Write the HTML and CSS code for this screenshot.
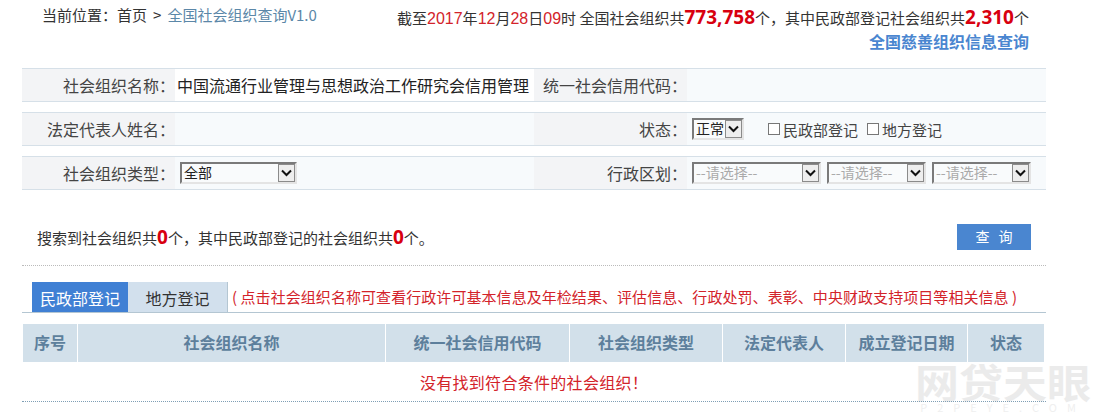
FILE: index.html
```html
<!DOCTYPE html>
<html lang="zh-CN">
<head>
  <meta charset="utf-8">
  <title>全国社会组织查询</title>
  <link rel="stylesheet" href="styles.css">
</head>
<body>
  <div class="page">
    <div class="top">
      <div class="crumb">当前位置<span class="pt">：</span>首页<span class="sep">&gt;</span><a href="#">全国社会组织查询V1.0</a></div>
      <div class="stat">
        <p>截至<span class="red">2017</span>年<span class="red">12</span>月<span class="red">28</span>日<span class="red">09</span>时 全国社会组织共<b class="num">773,758</b>个<span class="pt">，</span>其中民政部登记社会组织共<b class="num">2,310</b>个</p>
        <a class="charity" href="#">全国慈善组织信息查询</a>
      </div>
    </div>

    <div class="form-row">
      <div class="label">社会组织名称<span class="pt">：</span></div>
      <div class="value white">中国流通行业管理与思想政治工作研究会信用管理</div>
      <div class="label label-b">统一社会信用代码<span class="pt">：</span></div>
      <div class="value"></div>
    </div>
    <div class="form-row">
      <div class="label">法定代表人姓名<span class="pt">：</span></div>
      <div class="value"></div>
      <div class="label">状态<span class="pt">：</span></div>
      <div class="value">
        <div class="sel sel-status"><span>正常</span><i class="arrow"><svg width="11" height="8" viewBox="0 0 11 8"><path d="M1 1.5 5.5 6 10 1.5" fill="none" stroke="#111" stroke-width="2"/></svg></i></div>
        <label class="check first"><i class="box"></i>民政部登记</label>
        <label class="check"><i class="box"></i>地方登记</label>
      </div>
    </div>
    <div class="form-row">
      <div class="label">社会组织类型<span class="pt">：</span></div>
      <div class="value">
        <div class="sel sel-type"><span>全部</span><i class="arrow"><svg width="11" height="8" viewBox="0 0 11 8"><path d="M1 1.5 5.5 6 10 1.5" fill="none" stroke="#111" stroke-width="2"/></svg></i></div>
      </div>
      <div class="label">行政区划<span class="pt">：</span></div>
      <div class="value areas">
        <div class="sel sel-a1 grey"><span>--请选择--</span><i class="arrow"><svg width="11" height="8" viewBox="0 0 11 8"><path d="M1 1.5 5.5 6 10 1.5" fill="none" stroke="#111" stroke-width="2"/></svg></i></div>
        <div class="sel sel-a2 grey"><span>--请选择--</span><i class="arrow"><svg width="11" height="8" viewBox="0 0 11 8"><path d="M1 1.5 5.5 6 10 1.5" fill="none" stroke="#111" stroke-width="2"/></svg></i></div>
        <div class="sel sel-a2 grey"><span>--请选择--</span><i class="arrow"><svg width="11" height="8" viewBox="0 0 11 8"><path d="M1 1.5 5.5 6 10 1.5" fill="none" stroke="#111" stroke-width="2"/></svg></i></div>
      </div>
    </div>

    <div class="result">
      <div class="result-text">搜索到社会组织共<b class="zero">0</b>个<span class="pt">，</span>其中民政部登记的社会组织共<b class="zero">0</b>个。</div>
      <a class="btn" href="#">查 询</a>
    </div>

    <div class="tabs">
      <a class="tab active" href="#">民政部登记</a>
      <a class="tab" href="#">地方登记</a>
      <span class="hint">( 点击社会组织名称可查看行政许可基本信息及年检结果、评估信息、行政处罚、表彰、中央财政支持项目等相关信息 )</span>
    </div>

    <div class="thead">
      <div>序号</div>
      <div>社会组织名称</div>
      <div>统一社会信用代码</div>
      <div>社会组织类型</div>
      <div>法定代表人</div>
      <div>成立登记日期</div>
      <div>状态</div>
    </div>
    <div class="empty">没有找到符合条件的社会组织<span class="pt">！</span></div>
  </div>

  <div class="mark">
    <div class="mark-cn">网贷天眼</div>
    <div class="mark-en">P2PEYE.COM</div>
  </div>
</body>
</html>
```

FILE: styles.css
```css
html, body {
  margin: 0;
  padding: 0;
  height: 419px;
  overflow: hidden;
  background: #fff;
}
body {
  font-family: "Noto Sans CJK SC", "Noto Sans", sans-serif;
  font-size: 15px;
  color: #333;
  position: relative;
}
a {
  text-decoration: none;
}
p {
  margin: 0;
}
/* centred punctuation, the SC face pushes it into the corner */
.pt {
  font-family: "Noto Sans CJK TC", sans-serif;
}
.page {
  position: relative;
  z-index: 1;
  width: 1024px;
  margin-left: 22px;
}

/* top bar */
.top {
  display: flex;
  justify-content: space-between;
  height: 68px;
  padding: 5px 17px 0 20px;
  box-sizing: border-box;
}
.crumb {
  line-height: 20px;
}
.crumb a {
  color: #5b87a8;
}
.sep {
  margin: 0 6px;
}
.stat {
  text-align: right;
  line-height: 22px;
  margin-top: 1px;
}
.red {
  font-family: "Liberation Sans", sans-serif;
  font-size: 16px;
  color: #d3232a;
}
.num {
  font-family: "Noto Sans", sans-serif;
  font-size: 19px;
  font-weight: 700;
  color: #d8000f;
}
.charity {
  display: block;
  font-size: 16px;
  font-weight: 700;
  color: #4a86d0;
  line-height: 22px;
}

/* search form */
.form-row {
  display: grid;
  grid-template-columns: 153px 359px 153px 359px;
  height: 34px;
  margin-bottom: 10px;
  border-top: 1px solid #d6e0e8;
  border-bottom: 1px solid #d6e0e8;
  box-sizing: border-box;
  font-size: 16px;
}
.label {
  background: #f3f4f6;
  text-align: right;
  line-height: 32px;
  color: #444;
  white-space: nowrap;
}
.label-b {
  text-align: left;
  padding-left: 9px;
}
.value {
  background: #f7fafc;
  display: flex;
  align-items: center;
  padding-left: 5px;
  color: #222;
}
.white {
  background: #fff;
  padding-left: 2px;
  white-space: nowrap;
}
.sel {
  display: flex;
  justify-content: space-between;
  align-items: center;
  height: 22px;
  box-sizing: border-box;
  border: 2px solid #7a7a7a;
  border-right-color: #e4e4e4;
  border-bottom-color: #e4e4e4;
  font-size: 14px;
  line-height: 16px;
  padding-left: 2px;
  background: #f9fbfc;
  color: #222;
}
.sel span {
  margin-top: -2px;
}
.sel.grey {
  color: #aaa;
}
.arrow {
  display: flex;
  align-items: center;
  justify-content: center;
  width: 17px;
  height: 18px;
  box-sizing: border-box;
  background: #eee;
  border: 1px solid #8b8b8b;
}
.sel-status {
  width: 52px;
}
.sel-type {
  width: 117px;
}
.sel-a1 {
  width: 129px;
}
.sel-a2 {
  width: 99px;
}
.areas {
  gap: 6px;
}
.check {
  display: flex;
  align-items: center;
  font-size: 15px;
  margin-left: 9px;
  color: #444;
}
.check.first {
  margin-left: 24px;
}
.box {
  width: 10px;
  height: 10px;
  border: 1px solid #777;
  background: #fff;
  margin-right: 3px;
}

/* result line */
.result {
  display: flex;
  justify-content: space-between;
  align-items: center;
  height: 66px;
  padding: 8px 15px 0;
  border-bottom: 1px dotted #bbb;
  box-sizing: border-box;
}
.zero {
  font-family: "Noto Sans", sans-serif;
  font-size: 19px;
  font-weight: 700;
  color: #d8000f;
}
.btn {
  display: block;
  width: 74px;
  height: 26px;
  line-height: 25px;
  text-align: center;
  color: #fff;
  font-size: 14px;
  background: #4a86d0;
  word-spacing: 6px;
}

/* tabs */
.tabs {
  display: flex;
  align-items: flex-end;
  height: 47px;
  padding-left: 10px;
  border-bottom: 1px solid #b4c6d2;
  box-sizing: border-box;
}
.tab {
  width: 96px;
  height: 30px;
  line-height: 33px;
  text-align: center;
  font-size: 16px;
  color: #333;
  background: #d2e0ed;
}
.tab + .tab {
  width: 100px;
  box-sizing: border-box;
  border-right: 1px solid #b4c6d2;
}
.tab.active {
  background: #4080d4;
  color: #fff;
}
.hint {
  align-self: center;
  margin: 15px 0 0 4px;
  color: #d3232a;
  white-space: nowrap;
  letter-spacing: 0.06px;
}

/* table */
.thead {
  display: grid;
  grid-template-columns: 55px 308px 184px 153px 123px 122px 77px;
  margin-top: 11px;
  margin-left: 1px;
  width: 1022px;
  height: 38px;
  font-size: 16px;
  font-weight: 700;
  color: #5d7f9c;
}
.thead div {
  background: #d2e0ea;
  text-align: center;
  line-height: 36px;
  border-right: 1px solid #fff;
}
.empty {
  height: 40px;
  line-height: 40px;
  text-align: center;
  font-size: 16px;
  letter-spacing: 0.3px;
  color: #d3232a;
  border-bottom: 1px dotted #7f9fb5;
  box-sizing: border-box;
}

/* watermark */
.mark {
  position: absolute;
  left: 914px;
  top: 362px;
  width: 178px;
  color: #ebebeb;
  text-align: center;
}
.mark-cn {
  font-size: 40px;
  font-weight: 700;
  line-height: 38px;
  transform: scaleX(1.1);
}
.mark-en {
  margin-top: 1px;
  font-size: 11px;
  letter-spacing: 10px;
  line-height: 12px;
  color: #efefef;
}
```
